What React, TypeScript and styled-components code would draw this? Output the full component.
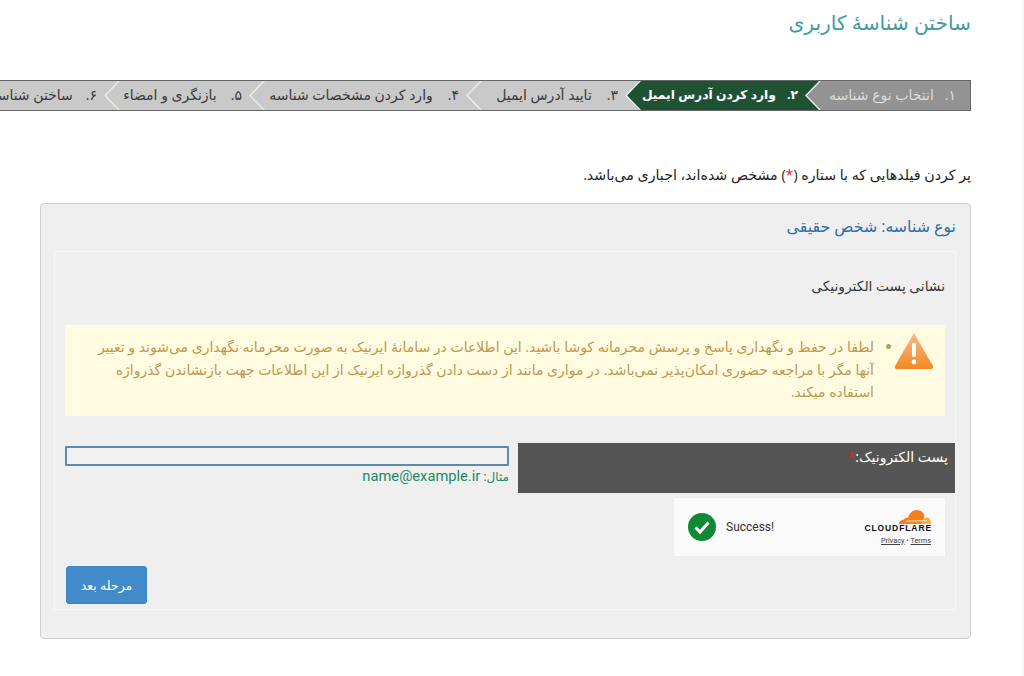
import React from "react";
import styled, { createGlobalStyle } from "styled-components";

const Global = createGlobalStyle`
  html, body { margin: 0; padding: 0; background: #fff; }
  body { font-family: "Open Sans", "DejaVu Sans", sans-serif; overflow: hidden; }
`;

const Page = styled.div`
  direction: rtl;
  width: 1024px;
  height: 676px;
  box-sizing: border-box;
  padding: 0 52px 0 40px;
  border-right: 1px solid #f4f4f4;
  overflow: hidden;
`;

const Title = styled.h1`
  margin: 0;
  padding-top: 8px;
  height: 80px;
  box-sizing: border-box;
  font-size: 20.2px;
  line-height: 28px;
  font-weight: 400;
  color: #3f9ba3;
`;

const Steps = styled.ol`
  list-style: none;
  margin: 0 0 0 -40px;
  padding: 0;
  height: 31px;
  display: flex;
  overflow: hidden;
  box-sizing: border-box;
  border-top: 1px solid #666;
  border-bottom: 1px solid #666;
  border-right: 1px solid #666;
`;

type Kind = "done" | "active" | "todo";

const stepBg = (k: Kind) => (k === "active" ? "#1f5233" : k === "done" ? "#929392" : "#c8c9c8");

const Step = styled.li<{ $kind: Kind; $w: number; $z: number }>`
  position: relative;
  flex: 0 0 ${(p) => p.$w}px;
  min-width: 0;
  z-index: ${(p) => p.$z};
  box-sizing: border-box;
  padding-right: 21px;
  font-size: ${(p) => (p.$kind === "active" ? "12.3px" : "14px")};
  line-height: 28px;
  white-space: nowrap;
  font-weight: ${(p) => (p.$kind === "active" ? 700 : 400)};
  color: ${(p) => (p.$kind === "active" ? "#fff" : p.$kind === "done" ? "#dcdcdc" : "#3a3a3a")};
  background: ${(p) => stepBg(p.$kind)};
  &:first-child {
    padding-right: 14px;
  }
  &::before {
    content: "";
    position: absolute;
    top: 0;
    bottom: 0;
    left: -12px;
    width: 12px;
    background: ${(p) => stepBg(p.$kind)};
    clip-path: polygon(100% 0, 0 50%, 100% 100%);
  }
  &::after {
    content: "";
    position: absolute;
    top: 0;
    bottom: 0;
    left: -14px;
    width: 16px;
    background: #e8eee8;
    clip-path: polygon(14px 0, 0 50%, 14px 100%, 16px 100%, 2px 50%, 16px 0);
  }
`;

const StepNum = styled.span<{ $gap: number }>`
  margin-left: ${(p) => p.$gap}px;
`;

const Note = styled.p`
  margin: 0;
  padding-top: 52px;
  height: 92px;
  box-sizing: border-box;
  font-size: 14.2px;
  line-height: 24px;
  color: #222;
`;

const Star = styled.span`
  color: #e0202a;
`;

const Panel = styled.section`
  height: 436px;
  box-sizing: border-box;
  background: #efefef;
  border: 1px solid #cfcfcf;
  border-radius: 4px;
  padding: 0 14px 0 13px;
`;

const PanelTitle = styled.h2`
  margin: 0;
  height: 47px;
  padding: 10px 0 0 0;
  box-sizing: border-box;
  font-size: 15.8px;
  line-height: 24px;
  font-weight: 400;
  color: #2a6ea6;
`;

const Inner = styled.div`
  height: 359px;
  box-sizing: border-box;
  border: 1px solid #f6f6f6;
  padding: 0 10px;
`;

const SectionHead = styled.h3`
  margin: 0;
  height: 73px;
  padding-top: 22px;
  box-sizing: border-box;
  font-size: 13.8px;
  line-height: 24px;
  font-weight: 400;
  color: #3a3a3a;
`;

const Alert = styled.div`
  height: 91px;
  box-sizing: border-box;
  background: #fefbe1;
  color: #c09853;
  display: flex;
  align-items: flex-start;
  padding: 5px 11px 0 0;
`;

const AlertIcon = styled.svg`
  flex: none;
  width: 40px;
  height: 38px;
  margin-top: 2px;
`;

const AlertList = styled.ul`
  margin: 0;
  padding: 6px 20px 0 25px;
  flex: 1;
  font-size: 14px;
  line-height: 22.5px;
  li::marker { color: #a8a35f; }
`;

const FieldRow = styled.div`
  display: flex;
  margin: 27px 0 0 -11px;
  height: 50px;
`;

const FieldLabel = styled.div`
  flex: 0 0 437px;
  background: #555;
  color: #fff;
  font-size: 14px;
  line-height: 28px;
  box-sizing: border-box;
  padding-right: 7px;
  margin-right: -10px;
`;

const FieldBody = styled.div`
  flex: 0 0 444px;
  margin-right: 9px;
  padding-top: 3px;
`;

const Input = styled.input`
  display: block;
  width: 100%;
  height: 20px;
  box-sizing: border-box;
  background: #f0f0f0;
  border: 2px solid #6189aa;
  border-radius: 1px;
  padding: 0;
  outline: 0;
`;

const Hint = styled.div`
  color: #1e8a63;
  font-size: 12px;
  line-height: 20px;
`;

const HintValue = styled.span`
  font-family: Roboto, "Liberation Sans", sans-serif;
  font-size: 14.7px;
  direction: ltr;
  display: inline-block;
`;

const Widget = styled.div`
  direction: ltr;
  width: 273px;
  height: 60px;
  box-sizing: border-box;
  margin: 4px -1px 0 0;
  background: #fafafa;
  border: 1px solid #ececec;
  display: flex;
  align-items: center;
  padding: 0 14px;
  font-family: Roboto, "Liberation Sans", sans-serif;
`;

const WidgetCheck = styled.svg`
  flex: none;
  width: 28px;
  height: 28px;
`;

const WidgetText = styled.span`
  margin-left: 10px;
  font-size: 12px;
  color: #333;
  flex: 1;
`;

const Brand = styled.div`
  display: flex;
  flex-direction: column;
  align-items: flex-end;
`;

const BrandCloud = styled.svg`
  width: 34px;
  height: 15px;
  display: block;
`;

const BrandName = styled.div`
  font-family: "Liberation Sans", sans-serif;
  font-size: 8.5px;
  line-height: 9px;
  font-weight: 700;
  letter-spacing: 0.9px;
  color: #111;
  margin-right: -1px;
`;

const BrandLinks = styled.div`
  font-size: 7.3px;
  line-height: 10px;
  margin-top: 3px;
  color: #444;
`;

const BrandLink = styled.span`
  text-decoration: underline;
`;

const Actions = styled.div`
  display: flex;
  justify-content: flex-end;
  margin-top: 9px;
`;

const Next = styled.button`
  width: 81px;
  height: 38px;
  margin-left: 1px;
  background: #428bca;
  color: #fff;
  border: 1px solid #3f86c4;
  border-radius: 3px;
  font-family: inherit;
  font-size: 12.5px;
  padding: 0;
`;

const steps: { n: string; t: string; k: Kind; w: number; g: number }[] = [
  { n: "۱.", t: "انتخاب نوع شناسه", k: "done", w: 151, g: 11 },
  { n: "۲.", t: "وارد کردن آدرس ایمیل", k: "active", w: 180, g: 11 },
  { n: "۳.", t: "تایید آدرس ایمیل", k: "todo", w: 159, g: 15 },
  { n: "۴.", t: "وارد کردن مشخصات شناسه", k: "todo", w: 217, g: 15 },
  { n: "۵.", t: "بازنگری و امضاء", k: "todo", w: 145, g: 14 },
  { n: "۶.", t: "ساختن شناسه", k: "todo", w: 145, g: 13 },
];

export default function App() {
  return (
    <Page>
      <Global />
      <Title>ساختن شناسهٔ کاربری</Title>
      <Steps>
        {steps.map((s, i) => (
          <Step key={s.n} $kind={s.k} $w={s.w} $z={10 - i}>
            <StepNum $gap={s.g}>{s.n}</StepNum>
            {s.t}
          </Step>
        ))}
      </Steps>
      <Note>
        پر کردن فیلدهایی که با ستاره (<Star>*</Star>) مشخص شده‌اند، اجباری می‌باشد.
      </Note>
      <Panel>
        <PanelTitle>نوع شناسه: شخص حقیقی</PanelTitle>
        <Inner>
          <SectionHead>نشانی پست الکترونیکی</SectionHead>
          <Alert>
            <AlertIcon viewBox="0 0 40 38">
              <defs>
                <linearGradient id="warn" x1="0" y1="0" x2="0" y2="1">
                  <stop offset="0" stopColor="#f9b98c" />
                  <stop offset="1" stopColor="#f08a24" />
                </linearGradient>
              </defs>
              <path d="M20 1 L39 34 Q40 37 37 37 L3 37 Q0 37 1 34 Z" fill="url(#warn)" />
              <rect x="18" y="11" width="4" height="14" rx="1.5" fill="#fff" />
              <circle cx="20" cy="30" r="2.4" fill="#fff" />
            </AlertIcon>
            <AlertList>
              <li>
                لطفا در حفظ و نگهداری پاسخ و پرسش محرمانه کوشا باشید. این اطلاعات در سامانهٔ ایرنیک به صورت محرمانه نگهداری می‌شوند و تغییر آنها مگر با مراجعه حضوری امکان‌پذیر نمی‌باشد. در مواری مانند از دست دادن گذرواژه ایرنیک از این اطلاعات جهت بازنشاندن گذرواژه استفاده میکند.
              </li>
            </AlertList>
          </Alert>
          <FieldRow>
            <FieldLabel>
              پست الکترونیک:<Star>*</Star>
            </FieldLabel>
            <FieldBody>
              <Input type="text" aria-label="پست الکترونیک" />
              <Hint>
                مثال: <HintValue>name@example.ir</HintValue>
              </Hint>
            </FieldBody>
          </FieldRow>
          <Widget>
            <WidgetCheck viewBox="0 0 28 28">
              <circle cx="14" cy="14" r="14" fill="#0f8a34" />
              <path d="M7.5 14.5 L12 19 L20.5 9.5" fill="none" stroke="#fff" strokeWidth="3" />
            </WidgetCheck>
            <WidgetText>Success!</WidgetText>
            <Brand>
              <BrandCloud viewBox="0 0 34 15">
                <path d="M2 15 C2 12 4 11 7 10.5 C8 9 10 8.5 11 9 C12 4 16 1 20 1 C24 1 27 4 27.5 7 L25 15 Z" fill="#f38020" />
                <path d="M24.5 15 C25.5 11 27 8.5 30 8.5 C33 8.5 34 12 34 15 Z" fill="#fbad41" />
                <path d="M9 12.2 L30 11.6" stroke="#fff" strokeWidth="0.7" fill="none" />
              </BrandCloud>
              <BrandName>CLOUDFLARE</BrandName>
              <BrandLinks>
                <BrandLink>Privacy</BrandLink> • <BrandLink>Terms</BrandLink>
              </BrandLinks>
            </Brand>
          </Widget>
          <Actions>
            <Next>مرحله بعد</Next>
          </Actions>
        </Inner>
      </Panel>
    </Page>
  );
}
